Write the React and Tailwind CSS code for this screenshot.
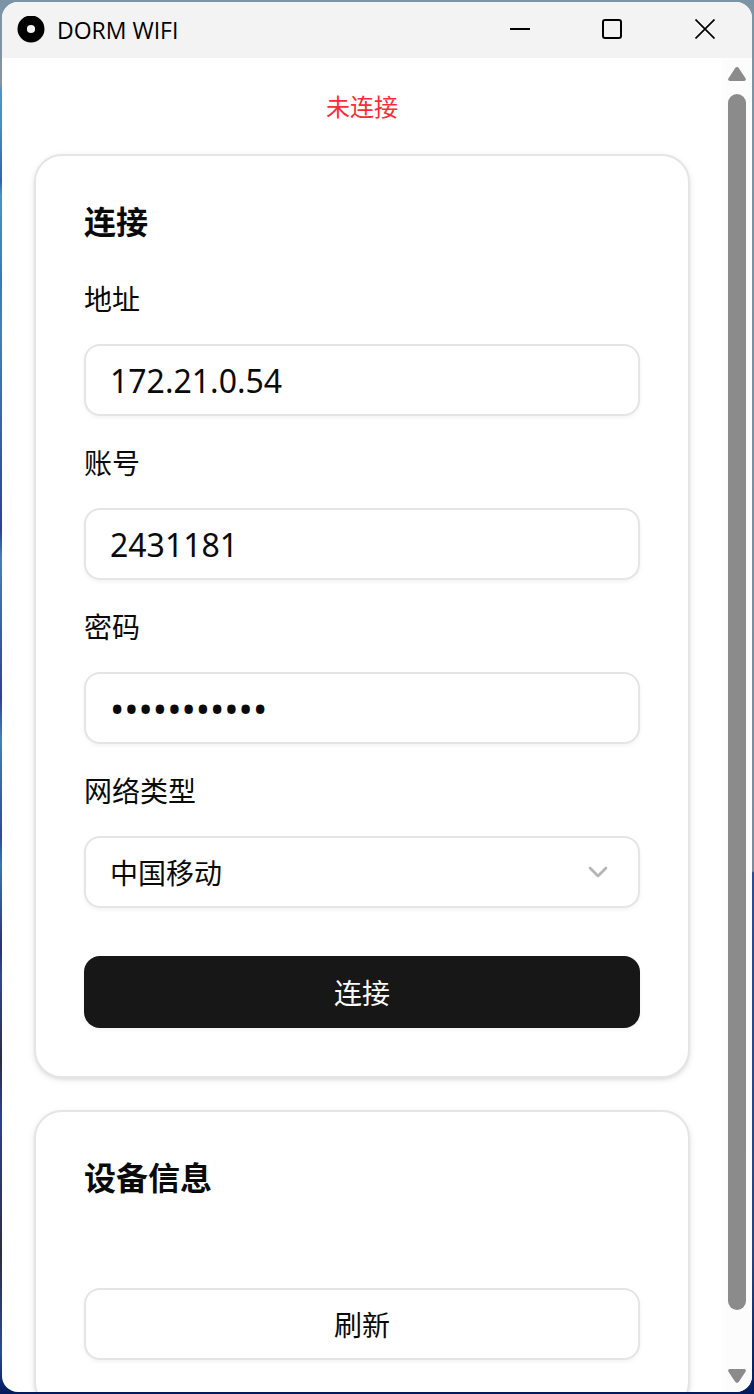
import { useState } from "react";
import { ChevronDown } from "lucide-react";

const fieldClass =
  "h-[72px] w-full rounded-2xl border-2 border-neutral-200 bg-white px-6 text-neutral-950 shadow-[0_2px_4px_rgba(0,0,0,0.05)] outline-none";

function TitleBar() {
  return (
    <header className="flex h-14 shrink-0 items-center bg-[#f3f3f3] pl-[15px] text-black">
      <svg viewBox="0 0 28 28" className="size-7 shrink-0" aria-hidden="true">
        <circle cx="14" cy="13" r="8.8" fill="none" stroke="currentColor" strokeWidth="9.4" />
      </svg>
      <h1 className="ml-3 grow font-['Open_Sans','Noto_Sans',sans-serif] text-[23px] leading-8">DORM WIFI</h1>
      <button type="button" aria-label="最小化" className="flex h-full w-[92px] items-center justify-center pb-0.5">
        <svg viewBox="0 0 20 20" className="size-5">
          <path d="M0 10H20" stroke="currentColor" strokeWidth="2" />
        </svg>
      </button>
      <button type="button" aria-label="最大化" className="flex h-full w-[92px] items-center justify-center pb-0.5">
        <svg viewBox="0 0 20 20" className="size-5">
          <rect x="1" y="1" width="18" height="18" rx="2" fill="none" stroke="currentColor" strokeWidth="2" />
        </svg>
      </button>
      <button type="button" aria-label="关闭" className="flex h-full w-[94px] items-center justify-center pb-0.5">
        <svg viewBox="0 0 20 20" className="size-5">
          <path d="M0.5 0.5L19.5 19.5M19.5 0.5L0.5 19.5" stroke="currentColor" strokeWidth="1.7" />
        </svg>
      </button>
    </header>
  );
}

function Card({ title, className, children }) {
  return (
    <section className="rounded-[28px] border-2 border-neutral-200 bg-white p-12 shadow-[0_2px_6px_rgba(0,0,0,0.1),0_2px_4px_-2px_rgba(0,0,0,0.1)]">
      <h2 className="text-[32px] leading-8 font-bold">{title}</h2>
      <div className={className}>{children}</div>
    </section>
  );
}

function Field({ id, label, children }) {
  return (
    <div className="flex flex-col gap-8">
      <label htmlFor={id} className="text-[28px] leading-7">
        {label}
      </label>
      {children}
    </div>
  );
}

function ScrollRail() {
  return (
    <div className="flex w-[30px] shrink-0 flex-col items-center bg-[#fcfcfc] py-2 text-[#8b8b8b]" aria-hidden="true">
      <svg viewBox="0 0 18 16" className="h-4 w-[18px] shrink-0">
        <path d="M7.1 2.2Q9 0 10.9 2.2L17.5 12.2Q18.6 15 16 15H2Q-0.6 15 0.5 12.2Z" fill="currentColor" />
      </svg>
      <div className="mt-3 mb-[58px] w-[18px] grow rounded-full bg-[#8b8b8b]" />
      <svg viewBox="0 0 18 16" className="h-4 w-[18px] shrink-0">
        <path d="M7.1 13.8Q9 16 10.9 13.8L17.5 3.8Q18.6 1 16 1H2Q-0.6 1 0.5 3.8Z" fill="currentColor" />
      </svg>
    </div>
  );
}

export default function App() {
  const [address, setAddress] = useState("172.21.0.54");
  const [account, setAccount] = useState("2431181");
  const [password, setPassword] = useState("dormwifi123");
  const [network, setNetwork] = useState("cmcc");

  return (
    <div className="h-screen bg-[linear-gradient(#7b94a5,#7b8c9e_62.5%,#2d4b94_62.6%,#2a4380_90%,#001a5c),linear-gradient(#7b94a5,#8593a3_6%,#4a96c4_6.5%,#4a8cbd_9%,#3461b5_13%,#4a94bd_14%,#3c78b8_20%,#4680b4_24%,#2d3f9e_38%,#4a7fb2_40%,#30409a_50%,#4482b0_53%,#30479f_60%,#3a78b0_62%,#2c3270_68%,#304a8c_70%,#2b2d48_76%,#2d438a_80%,#2b2d45_90%,#2b4c94_97%,#001a5c)] bg-[length:2px_100%,100%_100%] bg-[position:right,left] bg-no-repeat p-0.5 font-['Noto_Sans_CJK_SC',sans-serif] text-neutral-950">
      <div className="flex h-full flex-col overflow-hidden rounded-2xl bg-white">
        <TitleBar />
        <div className="flex min-h-0 grow">
          <main className="flex min-w-0 grow flex-col gap-8 overflow-hidden p-8">
            <p className="text-center text-2xl leading-8 text-[#fb2c36]">未连接</p>

            <Card title="连接" className="mt-12 flex flex-col gap-8">
              <Field id="address" label="地址">
                <input
                  id="address"
                  value={address}
                  onChange={(e) => setAddress(e.target.value)}
                  className={`${fieldClass} font-['Noto_Sans','Open_Sans',sans-serif] text-[32px]`}
                />
              </Field>
              <Field id="account" label="账号">
                <input
                  id="account"
                  value={account}
                  onChange={(e) => setAccount(e.target.value)}
                  className={`${fieldClass} font-['Noto_Sans','Open_Sans',sans-serif] text-[32px]`}
                />
              </Field>
              <Field id="password" label="密码">
                <input
                  id="password"
                  type="password"
                  value={password}
                  onChange={(e) => setPassword(e.target.value)}
                  className={`${fieldClass} font-['Noto_Sans','Open_Sans',sans-serif] text-[38px]`}
                />
              </Field>
              <Field id="network" label="网络类型">
                <div className="relative">
                  <select
                    id="network"
                    value={network}
                    onChange={(e) => setNetwork(e.target.value)}
                    className={`${fieldClass} appearance-none text-[28px]`}
                  >
                    <option value="cmcc">中国移动</option>
                  </select>
                  <ChevronDown className="pointer-events-none absolute inset-y-0 right-[26px] my-auto size-8 text-[#b5b5b5]" />
                </div>
              </Field>
              <button
                type="button"
                className="mt-4 h-[72px] w-full rounded-2xl bg-neutral-900 text-[28px] leading-8 text-neutral-50 shadow-[0_2px_4px_rgba(0,0,0,0.05)]"
              >
                连接
              </button>
            </Card>

            <Card title="设备信息" className="mt-24">
              <button
                type="button"
                className="h-[72px] w-full rounded-2xl border-2 border-neutral-200 bg-white text-[28px] leading-8 shadow-[0_2px_4px_rgba(0,0,0,0.05)]"
              >
                刷新
              </button>
            </Card>
          </main>
          <ScrollRail />
        </div>
      </div>
    </div>
  );
}
